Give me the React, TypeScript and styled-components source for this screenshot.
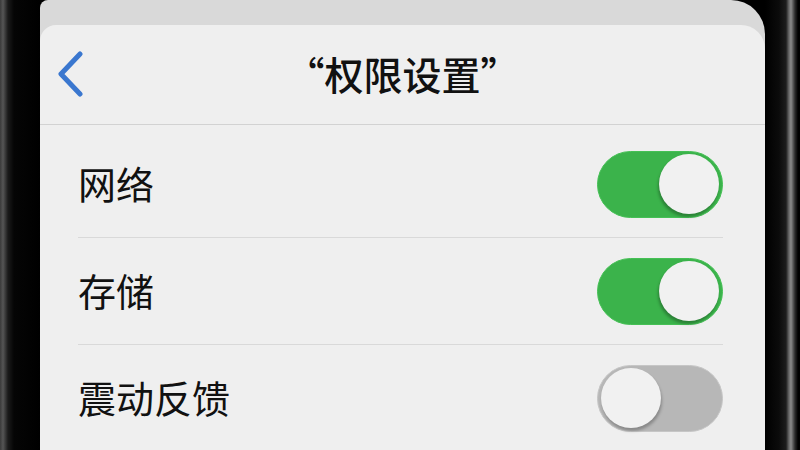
import styled, { createGlobalStyle } from 'styled-components';

const GlobalStyle = createGlobalStyle`
  html, body {
    margin: 0;
    padding: 0;
    background: #000;
    overflow: hidden;
  }
  body {
    font-family: "Noto Sans CJK SC", "Noto Sans", sans-serif;
  }
`;

interface Permission {
  id: string;
  label: string;
  enabled: boolean;
}

const PERMISSIONS: Permission[] = [
  { id: 'network', label: '网络', enabled: true },
  { id: 'storage', label: '存储', enabled: true },
  { id: 'haptics', label: '震动反馈', enabled: false },
];

const Device = styled.div`
  display: flex;
  width: 800px;
  height: 450px;
  background: #000;
  overflow: hidden;
`;

const LeftBezel = styled.div`
  width: 40px;
  flex-shrink: 0;
  background: linear-gradient(90deg, #3a3a3a 0px, #555 3px, #1a1a1a 8px, #050505 14px, #000 100%);
`;

const RightBezel = styled.div`
  width: 35px;
  flex-shrink: 0;
  background: linear-gradient(
    90deg,
    #000 0px,
    #0b0b0b 14px,
    #1c1c1c 21px,
    #6a6a6a 24px,
    #8a8a8a 26px,
    #2a2a2a 30px,
    #000 33px
  );
`;

const Screen = styled.div`
  flex: 1;
  display: flex;
  flex-direction: column;
  padding-top: 25px;
  background: #d9d9d9;
  border-radius: 8px 34px 0 0;
`;

const Sheet = styled.div`
  flex: 1;
  display: flex;
  flex-direction: column;
  background: #efefef;
  border-radius: 16px 24px 0 0;
`;

const Header = styled.header`
  position: relative;
  height: 99px;
  display: flex;
  align-items: center;
  justify-content: center;
  border-bottom: 1.5px solid #d2d2d2;
`;

const BackButton = styled.button`
  position: absolute;
  left: 12px;
  top: 24px;
  width: 36px;
  height: 50px;
  padding: 0;
  border: none;
  background: transparent;
  display: flex;
  align-items: center;
  justify-content: center;
`;

const Title = styled.h1`
  margin: 0;
  margin-top: -4px;
  font-size: 39px;
  font-weight: 500;
  color: #111;
`;

const List = styled.ul`
  list-style: none;
  margin: 0;
  padding: 6px 42px 0 38px;
`;

const Row = styled.li`
  height: 106px;
  display: flex;
  align-items: center;
  justify-content: space-between;
  & + & {
    border-top: 1.5px solid #d9d9d9;
  }
`;

const Label = styled.span`
  font-size: 38px;
  color: #111;
  margin-top: -4px;
`;

const Track = styled.div<{ $on: boolean }>`
  width: 126px;
  height: 67px;
  border-radius: 34px;
  box-sizing: border-box;
  display: flex;
  align-items: center;
  justify-content: ${p => (p.$on ? 'flex-end' : 'flex-start')};
  padding: 0 3px;
  background: ${p => (p.$on ? '#3bb34b' : '#b7b7b7')};
  border: 1.5px solid ${p => (p.$on ? '#45c055' : '#c6c6c6')};
`;

const Knob = styled.div<{ $on: boolean }>`
  width: 60px;
  height: 60px;
  border-radius: 50%;
  background: #f1f1f1;
  box-shadow: ${p =>
    p.$on
      ? '-1px 3px 3px rgba(0, 0, 0, 0.28)'
      : '1px 3px 3px rgba(0, 0, 0, 0.25)'};
`;

const Toggle = ({ on }: { on: boolean }) => (
  <Track $on={on}>
    <Knob $on={on} />
  </Track>
);

const ChevronLeft = () => (
  <svg width='30' height='46' viewBox='0 0 30 46' fill='none'>
    <path
      d='M25 3 L6 23 L25 43'
      stroke='#3a77cf'
      strokeWidth='5'
      strokeLinecap='round'
      strokeLinejoin='round'
    />
  </svg>
);

const App = () => {
  return (
    <>
      <GlobalStyle />
      <Device>
        <LeftBezel />
        <Screen>
          <Sheet>
            <Header>
              <BackButton aria-label='返回'>
                <ChevronLeft />
              </BackButton>
              <Title>“权限设置”</Title>
            </Header>
            <List>
              {PERMISSIONS.map(item => (
                <Row key={item.id}>
                  <Label>{item.label}</Label>
                  <Toggle on={item.enabled} />
                </Row>
              ))}
            </List>
          </Sheet>
        </Screen>
        <RightBezel />
      </Device>
    </>
  );
};

export default App;
